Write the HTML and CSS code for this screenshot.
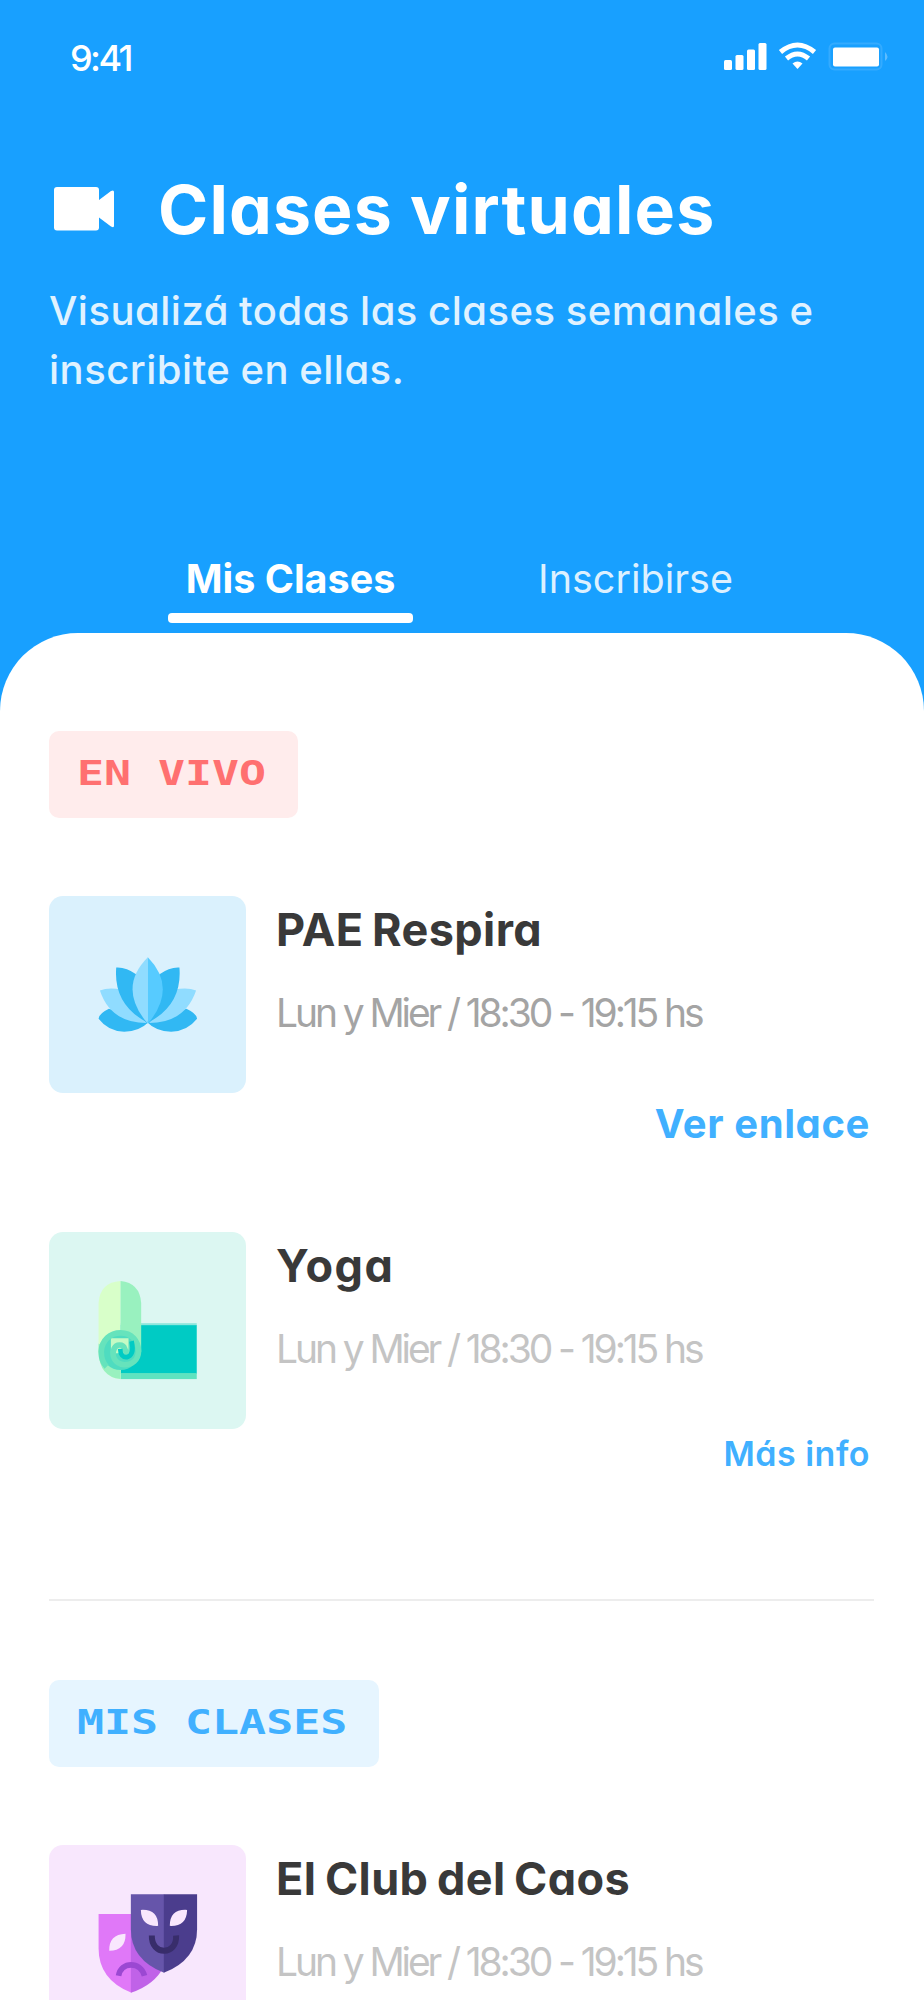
FILE: index.html
```html
<!DOCTYPE html>
<html lang="es">
<head>
    <meta charset="UTF-8">
    <title>Clases virtuales</title>
    <link rel="stylesheet" href="styles.css">
</head>

<body>
    <header class="header">
        <div class="status">
            <span class="time">9:41</span>
            <svg class="status-icons" width="166" height="30" viewBox="0 0 166 30">
                <g fill="#fff">
                    <rect x="0" y="19" width="8" height="10" rx="1.5"/>
                    <rect x="11.5" y="14" width="8" height="15" rx="1.5"/>
                    <rect x="23" y="8.500" width="8" height="20.500" rx="1.5"/>
                    <rect x="34.500" y="2" width="8" height="27" rx="1.5"/>
                    <path d="M73.500 28l-5-5.500q5-4 10 0z"/>
                    <rect x="109" y="6.500" width="46" height="19" rx="2"/>
                </g>
                <g fill="none" stroke="#fff" stroke-width="5">
                    <path d="M56.500 11q17-14 34 0"/>
                    <path d="M62.500 17.500q11-9 22 0"/>
                </g>
                <rect x="105.500" y="2.500" width="52" height="26" rx="5" fill="none" stroke="#fff" stroke-opacity=".12" stroke-width="2"/>
                <path d="M161 11q5 5 0 9z" fill="#fff" fill-opacity=".3"/>
            </svg>
        </div>
        <div class="heading">
            <svg class="camera" width="62" height="46" viewBox="0 0 62 46">
                <path fill="#fff" d="M4 1h39q3 0 3 3v10l12-9q3-1.500 3 1v34q0 2-3 .5l-12-9v10q0 3-3 3H4q-3 0-3-3V4q0-3 3-3z"/>
            </svg>
            <h1>Clases virtuales</h1>
        </div>
        <p class="intro">Visualizá todas las clases semanales e<br>inscribite en ellas.</p>
        <nav class="tabs">
            <a class="tab active">Mis Clases</a>
            <a class="tab">Inscribirse</a>
        </nav>
    </header>

    <main class="sheet">
        <div class="badge live"><span>EN VIVO</span></div>

        <article class="card">
            <div class="tile blue">
                <svg viewBox="27 49 592 592">
                    <path fill="#31b8f3" d="M207 388Q178 402 176 418Q205 456 253 457Q300 455 324 430Q347 455 394 457Q442 456 472 418Q470 402 440 388L324 425z"/>
                    <path fill="#90dcff" d="M180 333Q205 322 245 330L320 431Q212 430 180 333zM469 333Q444 322 404 330L328 431Q436 430 469 333z"/>
                    <path fill="#31b8f3" d="M229 264Q258 262 290 285L322 429Q220 375 229 264zM419 264Q390 262 358 285L326 429Q428 375 419 264z"/>
                    <path fill="#90dcff" d="M324 233Q232 325 324 433z"/>
                    <path fill="#57cbff" d="M324 233Q414 325 324 433z"/>
                </svg>
            </div>
            <div class="info">
                <h2>PAE Respira</h2>
                <p class="hours dark">Lun y Mier / 18:30 - 19:15 hs</p>
                <a class="link strong">Ver enlace</a>
            </div>
        </article>

        <article class="card">
            <div class="tile green">
                <svg viewBox="27 35 592 592">
                    <rect x="242" y="309" width="229" height="8" fill="#8fe6dc"/>
                    <rect x="242" y="315" width="229" height="146" fill="#00cbc4"/>
                    <rect x="242" y="459" width="229" height="18" fill="#5fe3c0"/>
                    <path fill="#d8ffc9" d="M242 182V477Q179 470 176 397V248Q180 186 242 182z"/>
                    <path fill="#99f1bf" d="M242 182Q300 188 304 248V395H242z"/>
                    <path fill="#99f1bf" d="M176 370V397Q179 470 242 477V400z"/>
                    <!-- rolled end -->
                    <circle cx="242" cy="394" r="56" fill="#4fdcc0"/>
                    <path d="M213 354h53v45h-53z" fill="#c4fac4"/>
                    <path fill="none" stroke="#66e3bc" stroke-width="17" d="M200 440C188 428 184 412 184 394C186 360 211 338 242 338C275 338 296 362 296 394C295 421 276 434 254 434C225 432 213 407 223 385C229 371 250 371 254 385Q257 397 267 397"/>
                    <path fill="none" stroke="#00cbc4" stroke-width="14" d="M241 386Q242 413 261 411Q285 405 275 363"/>
                </svg>
            </div>
            <div class="info">
                <h2 class="wide">Yoga</h2>
                <p class="hours">Lun y Mier / 18:30 - 19:15 hs</p>
                <a class="link">Más info</a>
            </div>
        </article>

        <hr>

        <div class="badge mine"><span>MIS CLASES</span></div>

        <article class="card">
            <div class="tile purple">
                <svg viewBox="27 45 592 592">
                    <path fill="#e078f8" d="M176 252H275V489Q176 450 176 355z"/>
                    <path fill="#c062e8" d="M273 252H372V410Q345 465 273 489z"/>
                    <path fill="none" stroke="#9b48d2" stroke-width="17" d="M236 438C244 394 302 394 314 438"/>
                    <path fill="#f9e7fd" d="M257 312Q258 363 208 363Q207 314 257 312z"/>
                    <path fill="#6655aa" d="M273 193H373V429Q273 390 273 298z"/>
                    <path fill="#4b3d8d" d="M372 193H472V298Q472 390 372 429z"/>
                    <path fill="none" stroke="#382d6b" stroke-width="18" d="M336 317C334 378 412 379 409 317"/>
                    <path fill="#f9e7fd" d="M303 240Q355 237 355 288Q304 290 303 240zM442 240Q441 290 390 288Q390 237 442 240z"/>
                </svg>
            </div>
            <div class="info">
                <h2>El Club del Caos</h2>
                <p class="hours">Lun y Mier / 18:30 - 19:15 hs</p>
            </div>
        </article>
    </main>
</body>

</html>
```
FILE: styles.css
```css
* {
    margin: 0;
    padding: 0;
    box-sizing: border-box;
}
body {
    width: 924px;
    height: 2000px;
    overflow: hidden;
    background: #18a0ff;
    font-family: Inter, "Liberation Sans", sans-serif;
    font-feature-settings: "cv11";
}

/* header */
.header {
    height: 633px;
    padding-top: 36px;
    color: #fff;
}
.status {
    display: flex;
    align-items: center;
    justify-content: space-between;
    height: 44px;
    padding: 0 34px 0 70px;
}
.status-icons {
    margin-bottom: 4px;
}
.time {
    font-size: 36px;
    font-weight: 500;
    line-height: 44px;
    letter-spacing: -2.6px;
}
.heading {
    display: flex;
    align-items: center;
    gap: 43px;
    margin-top: 89px;
    padding-left: 53px;
}
h1 {
    font-size: 68px;
    font-weight: 650;
    line-height: 80px;
    letter-spacing: 1.1px;
    white-space: nowrap;
}
.intro {
    margin-top: 32px;
    padding-left: 49px;
    font-size: 40px;
    font-weight: 450;
    line-height: 59.3px;
    letter-spacing: .5px;
    word-spacing: -1px;
    color: #e0f2ff;
    white-space: nowrap;
}
.tabs {
    display: flex;
    gap: 100px;
    margin-top: 154px;
    padding-left: 168px;
    font-feature-settings: normal;
}
.tab {
    width: 245px;
    height: 69px;
    font-size: 39.5px;
    line-height: 50px;
    text-align: center;
    color: #dcf0ff;
}
.tab.active {
    font-weight: 700;
    color: #fff;
}
.tab.active::after {
    content: "";
    display: block;
    height: 10px;
    margin-top: 9px;
    border-radius: 4px;
    background: #fff;
}

/* content */
.sheet {
    height: 1367px;
    padding: 98px 50px 0 49px;
    border-radius: 78px 78px 0 0;
    background: #fff;
    overflow: hidden;
}
.badge {
    height: 87px;
    padding-left: 28px;
    border-radius: 10px;
    font: bold 34px/85px "DejaVu Sans Mono", monospace;
}
.badge span {
    display: inline-block;
    transform: scaleX(1.32);
    transform-origin: 0 0;
}
.live {
    width: 249px;
    background: #ffecec;
    color: #ff7070;
}
.mine {
    width: 330px;
    background: #e6f5ff;
    color: #40b0ff;
}
.card {
    display: flex;
    gap: 30px;
    margin-top: 78px;
}
.card + .card {
    margin-top: 83px;
}
.tile {
    flex: none;
    width: 197px;
    height: 197px;
    border-radius: 14px;
    overflow: hidden;
}
.tile svg {
    display: block;
}
.blue {
    background: #daf1fd;
}
.green {
    background: #dcf7f2;
}
.purple {
    background: #f8e7fd;
}
.info {
    display: flex;
    flex-direction: column;
    flex: 1;
    padding-top: 7px;
}
h2 {
    font-size: 45px;
    font-weight: 700;
    line-height: 54px;
    letter-spacing: .4px;
    word-spacing: -2.5px;
    color: #393939;
    white-space: nowrap;
}
h2.wide {
    letter-spacing: 1.5px;
}
.hours {
    margin-top: 31px;
    font-size: 39px;
    line-height: 50px;
    letter-spacing: -3.1px;
    color: #c4c4c4;
    white-space: nowrap;
}
.hours.dark {
    color: #a4a4a4;
}
.link {
    align-self: flex-end;
    margin-top: 55px;
    padding-right: 4px;
    font-size: 34px;
    font-weight: 600;
    line-height: 50px;
    letter-spacing: .5px;
    color: #40b0ff;
}
.link.strong {
    margin-top: 61px;
    font-size: 40px;
    font-weight: 700;
    letter-spacing: .6px;
}
hr {
    height: 2px;
    margin: 120px 0 79px;
    border: 0;
    background: #ededed;
}
```
